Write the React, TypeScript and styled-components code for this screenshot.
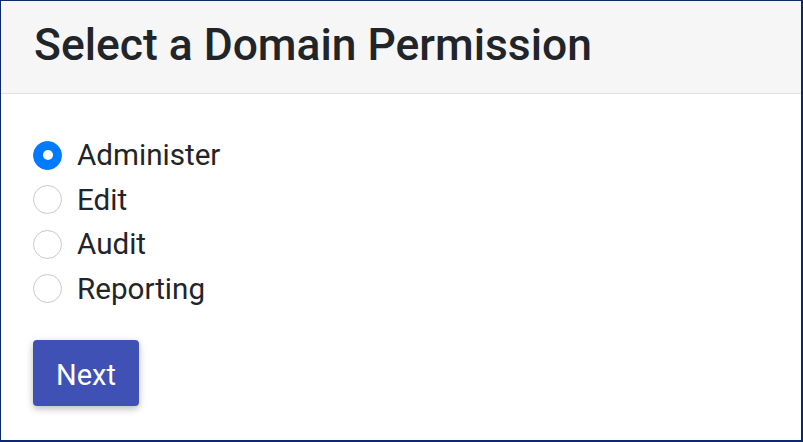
import React, { useState } from 'react'
import styled, { createGlobalStyle } from 'styled-components'

const GlobalStyle = createGlobalStyle`
  html, body {
    margin: 0;
    padding: 0;
    background: #ffffff;
  }
  body {
    font-family: Roboto, "Liberation Sans", Arial, sans-serif;
    color: #212529;
  }
`

const Frame = styled.div`
  box-sizing: border-box;
  width: 803px;
  height: 442px;
  border-style: solid;
  border-color: #0b2a6c;
  border-width: 1px 2px 2px 1px;
  background: #ffffff;
  display: flex;
  flex-direction: column;
  overflow: hidden;
`

const Header = styled.div`
  box-sizing: border-box;
  height: 93px;
  background: #f6f6f6;
  border-bottom: 1px solid #e2e2e2;
  display: flex;
  align-items: center;
  padding: 0 33px 4px;
`

const Title = styled.h1`
  margin: 0;
  font-size: 44.4px;
  font-weight: 500;
  color: #212529;
  letter-spacing: 0;
`

const Body = styled.div`
  display: flex;
  flex-direction: column;
  align-items: flex-start;
  padding: 39px 32px 0;
`

const OptionList = styled.div`
  display: flex;
  flex-direction: column;
`

const Option = styled.label`
  display: flex;
  align-items: center;
  gap: 15px;
  height: 44.5px;
  font-size: 29.6px;
  cursor: pointer;
`

const Dot = styled.span<{ $checked: boolean }>`
  box-sizing: border-box;
  width: 29px;
  height: 29px;
  border-radius: 50%;
  flex-shrink: 0;
  display: flex;
  align-items: center;
  justify-content: center;
  background: ${({ $checked }) => ($checked ? '#007bff' : '#ffffff')};
  border: ${({ $checked }) => ($checked ? '1px solid #007bff' : '1.5px solid #c6cacf')};

  &::after {
    content: '';
    width: 10px;
    height: 10px;
    border-radius: 50%;
    background: #ffffff;
    display: ${({ $checked }) => ($checked ? 'block' : 'none')};
  }
`

const HiddenInput = styled.input`
  position: absolute;
  opacity: 0;
  width: 0;
  height: 0;
`

const NextButton = styled.button`
  margin-top: 29px;
  width: 106px;
  height: 66px;
  padding: 3px 0 0;
  border: none;
  border-radius: 4px;
  background: #3f51b5;
  color: #ffffff;
  font-family: Roboto, "Liberation Sans", Arial, sans-serif;
  font-size: 29px;
  font-weight: 400;
  box-shadow: 0 3px 6px rgba(0, 0, 0, 0.2), 0 2px 12px rgba(0, 0, 0, 0.08);
  cursor: pointer;
`

const permissions = ['Administer', 'Edit', 'Audit', 'Reporting']

export default function App() {
  const [selected, setSelected] = useState('Administer')

  return (
    <>
      <GlobalStyle />
      <Frame>
        <Header>
          <Title>Select a Domain Permission</Title>
        </Header>
        <Body>
          <OptionList>
            {permissions.map((p) => (
              <Option key={p}>
                <HiddenInput
                  type="radio"
                  name="permission"
                  checked={selected === p}
                  onChange={() => setSelected(p)}
                />
                <Dot $checked={selected === p} />
                {p}
              </Option>
            ))}
          </OptionList>
          <NextButton>Next</NextButton>
        </Body>
      </Frame>
    </>
  )
}
